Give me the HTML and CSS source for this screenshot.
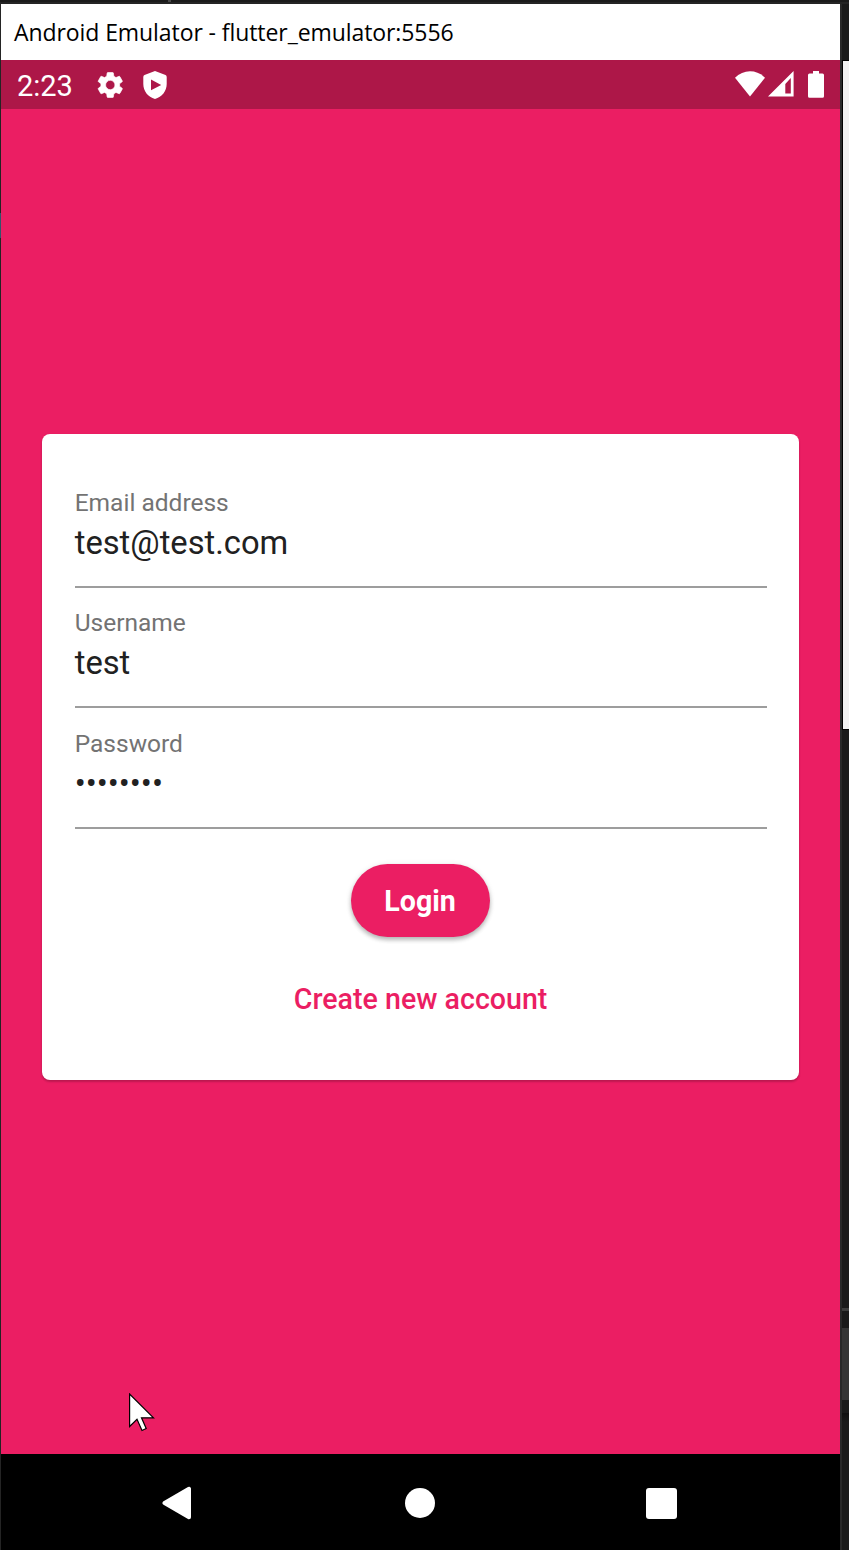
FILE: index.html
```html
<!DOCTYPE html>
<html lang="en">
<head>
<meta charset="utf-8">
<title>Android Emulator - flutter_emulator:5556</title>
<link rel="stylesheet" href="styles.css">
</head>
<body>
<div class="top-edge"><span class="top-tick"></span></div>
<div class="desktop">
  <div class="left-edge"></div>
  <main class="emulator">
    <header class="titlebar"><span class="title">Android Emulator - flutter_emulator:5556</span></header>
    <div class="statusbar">
      <span class="clock">2:23</span>
      <svg class="gear" viewBox="1.800 2 20 20"><path fill="#fff" stroke="#fff" stroke-width=".5" fill-rule="evenodd" d="M19.14 12.94c.04-.3.06-.61.06-.94 0-.32-.02-.64-.07-.94l2.03-1.58c.18-.14.23-.41.12-.61l-1.92-3.32c-.12-.22-.37-.29-.59-.22l-2.39.96c-.5-.38-1.03-.7-1.62-.94l-.36-2.54c-.04-.24-.24-.41-.48-.41h-3.84c-.24 0-.43.17-.47.41l-.36 2.54c-.59.24-1.13.57-1.62.94l-2.39-.96c-.22-.08-.47 0-.59.22L2.74 8.87c-.12.21-.08.47.12.61l2.03 1.58c-.05.3-.09.63-.09.94s.02.64.07.94l-2.03 1.58c-.18.14-.23.41-.12.61l1.92 3.32c.12.22.37.29.59.22l2.39-.96c.5.38 1.03.7 1.62.94l.36 2.54c.05.24.24.41.48.41h3.84c.24 0 .44-.17.47-.41l.36-2.54c.59-.24 1.13-.56 1.62-.94l2.39.96c.22.08.47 0 .59-.22l1.92-3.32c.12-.22.07-.47-.12-.61l-2.01-1.58zM12 15.6a3.6 3.6 0 1 1 0-7.2 3.6 3.6 0 0 1 0 7.2z"/></svg>
      <svg class="shield" viewBox="0 0 24 28"><path fill="#fff" fill-rule="evenodd" d="M12 0 22.5 4Q23.7 4.500 23.700 6V13C23.700 20 19 26 12 28C5 26 .3 20 .3 13V6Q.3 4.500 1.500 4ZM8 8.500V19.200L18.200 13.900Z"/></svg>
      <span class="spacer"></span>
      <svg class="wifi" viewBox="0 0 30 26"><path fill="#fff" d="M15 25.500 0 6.800Q6.500 .3 15 .3T30 6.800Z"/></svg>
      <svg class="signal" viewBox="0 0 26 26"><path fill="#fff" fill-rule="evenodd" d="M0 25.500 25.600 0V25.500ZM17.300 22.500H22.800V7L17.300 13Z"/></svg>
      <svg class="battery" viewBox="0 0 16 27"><path fill="#fff" d="M5 0H11V2.600H14.500Q16 2.600 16 4.100V25.200Q16 26.700 14.500 26.700H1.500Q0 26.700 0 25.200V4.100Q0 2.600 1.500 2.600H5Z"/></svg>
    </div>
    <section class="app">
      <form class="card">
        <div class="field"><label class="label">Email address</label><div class="value email">test@test.com</div></div>
        <div class="field"><label class="label user">Username</label><div class="value test">test</div></div>
        <div class="field"><label class="label">Password</label><div class="value dots">••••••••</div></div>
        <button class="login" type="button">Login</button>
        <a class="create">Create new account</a>
      </form>
      <svg class="cursor" viewBox="0 0 26 40"><path fill="#fff" stroke="#000" stroke-width="1.200" d="M.6 1V33.500L8 26.300 13 37.500 17.200 35.500 12.500 24.800H24.500Z"/></svg>
    </section>
    <nav class="navbar">
      <svg class="back" viewBox="0 0 30 34"><path fill="#fff" stroke="#fff" stroke-width="4" stroke-linejoin="round" d="M2.500 17 27 2.800V31.200Z"/></svg>
      <span class="home"></span>
      <span class="recent"></span>
    </nav>
  </main>
  <div class="frame-edge"></div>
  <aside class="backdrop">
    <div class="upper"></div>
    <div class="panel"></div>
    <div class="middle"></div>
    <div class="rule"></div>
    <div class="gap"></div>
    <div class="block"></div>
    <div class="lower"></div>
    <div class="shade"></div>
  </aside>
</div>
</body>
</html>
```
FILE: styles.css
```css
* { box-sizing: border-box; }
body { margin: 0; width: 849px; height: 1550px; overflow: hidden; background: #1a1a1a; font-family: Roboto, sans-serif; }
svg { display: block; flex: none; }
.top-edge { height: 4px; background: linear-gradient(#1a1a1a 50%, #242424 50%); padding-left: 168px; }
.top-tick { display: block; width: 3px; height: 2px; background: #4a4a4a; }
.desktop { display: grid; grid-template-columns: 1px 839px 2px 7px; height: 1546px; }
.left-edge { background: linear-gradient(#242424 209px, #34546b 209px 234px, #242424 234px); }
.emulator { display: flex; flex-direction: column; }
.titlebar { height: 56px; background: #fff; padding-left: 13px; display: flex; align-items: center; }
.title { font-family: "Open Sans", "Noto Sans", sans-serif; font-size: 23px; line-height: 56px; letter-spacing: -.08px; color: #000; white-space: nowrap; }
.statusbar { height: 49px; background: #ad1748; display: flex; align-items: center; padding: 0 16px; color: #fff; }
.clock { width: 80px; font-size: 29px; line-height: 49px; padding-top: 3px; }
.gear { width: 26px; height: 26px; }
.shield { width: 24px; height: 28px; margin-left: 20px; }
.spacer { flex: 1; }
.wifi { width: 30px; height: 26px; }
.signal { width: 26px; height: 26px; margin: 0 14px 0 3px; }
.wifi, .signal, .battery { margin-top: -1px; }
.battery { width: 16px; height: 27px; }
.app { position: relative; height: 1345px; background: #eb1e63; padding: 324.700px 41px 0 40.700px; }
.card { height: 646.300px; border-radius: 8px; background: #fff; padding: 49px 32.500px 0 33px; display: flex; flex-direction: column; align-items: center; box-shadow: 0 2px 2px rgba(0,0,0,.16), 0 1px 3px rgba(0,0,0,.08); }
.field { width: 100%; height: 120.400px; border-bottom: 2px solid #9d9d9d; padding-top: 20.200px; margin: 0; }
.field:first-child { height: 105.300px; padding-top: 5px; }
.label { display: block; font-size: 24.500px; line-height: 29px; color: #737373; }
.value { font-size: 32.700px; line-height: 40px; margin-top: 6.400px; color: #212121; white-space: nowrap; }
.test { margin-top: 5.800px; }
.login { width: 139px; height: 73.500px; margin-top: 35px; border: 0; border-radius: 37px; background: #eb1e63; color: #fff; font: 700 28.600px/74px Roboto, sans-serif; padding: 0 1px 0 0; box-shadow: 0 3px 4px rgba(0,0,0,.24), 0 1px 6px rgba(0,0,0,.1); }
.create { margin-top: 45px; font-size: 28.600px; line-height: 34px; font-weight: 500; color: #eb1e63; white-space: nowrap; }
.cursor { position: absolute; left: 128px; top: 1284px; width: 26px; height: 40px; }
.navbar { flex: 1; background: #000; display: flex; align-items: center; padding: 2px 0 0 161px; }
.back { width: 30px; height: 34px; }
.home { width: 30px; height: 30px; border-radius: 50%; background: #fff; margin-left: 213px; }
.recent { width: 31px; height: 31px; border-radius: 3px; background: #fff; margin-left: 211px; }
.frame-edge { background: #282828; }
.backdrop { display: flex; flex-direction: column; background: #1a1a1a; }
.upper { height: 56px; }
.panel { height: 670px; background: #f0f0f0; border: solid #000; border-width: 1px 0 1px 1px; }
.middle { height: 578px; }
.rule { height: 3px; background: #3d3d3d; }
.gap { height: 17px; }
.block { height: 72px; background: #353535; }
.lower { height: 13px; }
.shade { height: 9px; background: linear-gradient(#101010, #1a1a1a); }
```
